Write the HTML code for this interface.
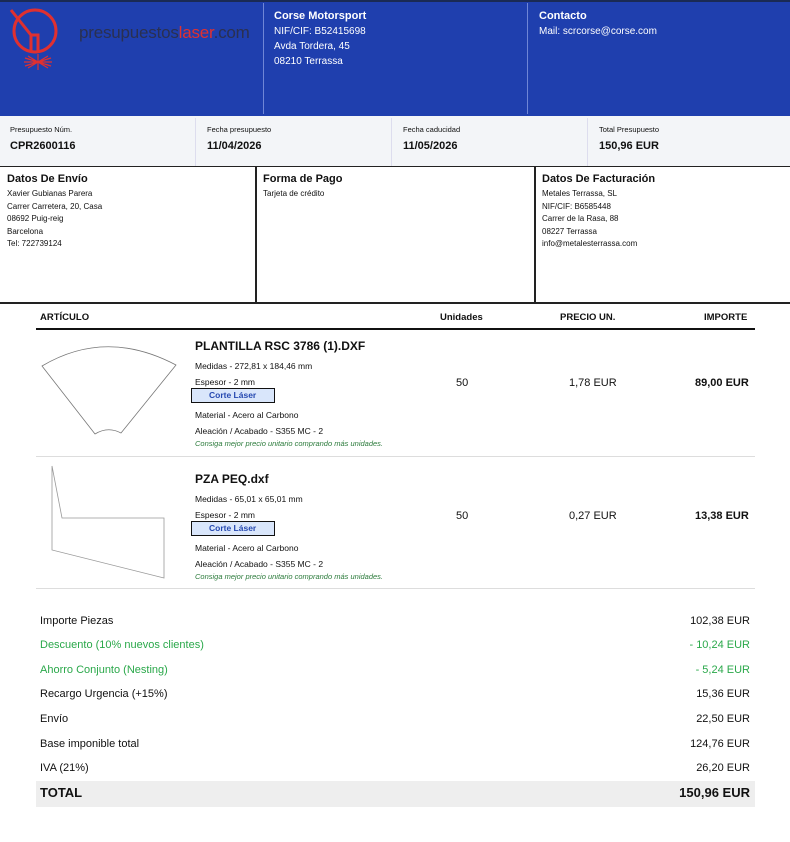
<!DOCTYPE html><html><head><meta charset="utf-8"><style>
*{margin:0;padding:0;box-sizing:border-box}
body{width:790px;height:842px;background:#fff;font-family:"Liberation Sans",sans-serif;color:#111;position:relative;overflow:hidden}
.a{position:absolute}
.hdr{left:0;top:0;width:790px;height:116px;background:#1f3fae;border-top:2px solid #1a2a55}
.w{color:#fff}
.bx{font-size:8px;line-height:12.6px}
.row{position:absolute;left:40px;width:710px;font-size:11px}
.row span{position:absolute;right:0}
</style></head><body>
<div class="a hdr"></div>
<svg class="a" style="left:0;top:0" width="80" height="75" viewBox="0 0 80 75">
<circle cx="35" cy="31" r="21" fill="none" stroke="#e03030" stroke-width="3"/>
<path d="M11 10 L31 35 L38 35 L38 52 M31 35 L31 52" fill="none" stroke="#e03030" stroke-width="3"/>
<g stroke="#e03030" stroke-width="1.2"><path d="M24 62 L52 62 M38 54 L38 70 M28 56 L48 68 M48 56 L28 68 M25 58 L51 66 M51 58 L25 66"/></g>
</svg>
<div class="a" style="left:79px;top:23px;font-size:17px;color:#2a3050;letter-spacing:-0.2px">presupuestos<span style="color:#e03030">laser</span>.com</div>
<div class="a" style="left:263px;top:3px;width:1px;height:111px;background:#6f86d6"></div>
<div class="a" style="left:527px;top:3px;width:1px;height:111px;background:#6f86d6"></div>
<div class="a w" style="left:274px;top:9px;font-size:11px;line-height:15px"><b>Corse Motorsport</b><br><span style="font-size:10px">NIF/CIF: B52415698<br>Avda Tordera, 45<br>08210 Terrassa</span></div>
<div class="a w" style="left:539px;top:9px;font-size:11px;line-height:15px"><b>Contacto</b><br><span style="font-size:10px">Mail: scrcorse@corse.com</span></div>
<div class="a" style="left:0;top:116px;width:790px;height:51px;background:#f3f5f8;border-bottom:1px solid #222"></div>
<div class="a" style="left:195px;top:118px;width:1px;height:48px;background:#dde"></div>
<div class="a" style="left:391px;top:118px;width:1px;height:48px;background:#dde"></div>
<div class="a" style="left:587px;top:118px;width:1px;height:48px;background:#dde"></div>
<div class="a" style="left:10px;top:125px;font-size:7.5px">Presupuesto Núm.</div><div class="a" style="left:10px;top:140px;font-size:11px;font-weight:bold">CPR2600116</div>
<div class="a" style="left:207px;top:125px;font-size:7.5px">Fecha presupuesto</div><div class="a" style="left:207px;top:140px;font-size:11px;font-weight:bold">11/04/2026</div>
<div class="a" style="left:403px;top:125px;font-size:7.5px">Fecha caducidad</div><div class="a" style="left:403px;top:140px;font-size:11px;font-weight:bold">11/05/2026</div>
<div class="a" style="left:599px;top:125px;font-size:7.5px">Total Presupuesto</div><div class="a" style="left:599px;top:140px;font-size:11px;font-weight:bold">150,96 EUR</div>
<div class="a" style="left:0;top:302px;width:790px;height:2px;background:#222"></div>
<div class="a" style="left:255px;top:167px;width:2px;height:136px;background:#222"></div>
<div class="a" style="left:534px;top:167px;width:2px;height:136px;background:#222"></div>
<div class="a" style="left:7px;top:173px;font-size:11px;font-weight:bold">Datos De Envío</div>
<div class="a bx" style="left:7px;top:188px">Xavier Gubianas Parera<br>Carrer Carretera, 20, Casa<br>08692 Puig-reig<br>Barcelona<br>Tel: 722739124</div>
<div class="a" style="left:263px;top:173px;font-size:11px;font-weight:bold">Forma de Pago</div>
<div class="a bx" style="left:263px;top:188px">Tarjeta de crédito</div>
<div class="a" style="left:542px;top:173px;font-size:11px;font-weight:bold">Datos De Facturación</div>
<div class="a bx" style="left:542px;top:188px">Metales Terrassa, SL<br>NIF/CIF: B6585448<br>Carrer de la Rasa, 88<br>08227 Terrassa<br>info@metalesterrassa.com</div>
<div class="a" style="left:40px;top:312px;font-size:9.5px;font-weight:bold">ARTÍCULO</div>
<div class="a" style="left:440px;top:312px;font-size:9.5px;font-weight:bold">Unidades</div>
<div class="a" style="left:560px;top:312px;font-size:9.5px;font-weight:bold">PRECIO UN.</div>
<div class="a" style="left:704px;top:312px;font-size:9.5px;font-weight:bold">IMPORTE</div>
<div class="a" style="left:36px;top:328px;width:719px;height:2px;background:#111"></div>
<div class="a" style="left:36px;top:456px;width:719px;height:1px;background:#ddd"></div>
<div class="a" style="left:36px;top:588px;width:719px;height:1px;background:#ddd"></div>
<svg class="a" style="left:36px;top:340px" width="150" height="250" viewBox="0 0 150 250">
<path d="M6 26 Q70 -12 140 25 L85 93 Q72 86 59 94 Z" fill="#fff" stroke="#777" stroke-width="0.8" stroke-linejoin="round"/>
<path d="M16 126 L26 178 L128 178 L128 238 L16 210 Z" fill="none" stroke="#999" stroke-width="0.8"/>
</svg>
<div class="a" style="left:195px;top:339px;font-size:12px;font-weight:bold">PLANTILLA RSC 3786 (1).DXF</div>
<div class="a" style="left:195px;top:472px;font-size:12px;font-weight:bold">PZA PEQ.dxf</div>
<div class="a" style="left:195px;top:359px;font-size:8.5px;line-height:15.5px">Medidas - 272,81 x 184,46 mm<br>Espesor - 2 mm</div>
<div class="a" style="left:195px;top:492px;font-size:8.5px;line-height:15.5px">Medidas - 65,01 x 65,01 mm<br>Espesor - 2 mm</div>
<div class="a" style="left:191px;top:388px;width:84px;height:15px;background:#d9e6fb;border:1px solid #111;font-size:8.5px;font-weight:bold;color:#2548b0;padding-left:17px;line-height:13px">Corte Láser</div>
<div class="a" style="left:191px;top:521px;width:84px;height:15px;background:#d9e6fb;border:1px solid #111;font-size:8.5px;font-weight:bold;color:#2548b0;padding-left:17px;line-height:13px">Corte Láser</div>
<div class="a" style="left:195px;top:407px;font-size:8.5px;line-height:16px">Material - Acero al Carbono<br>Aleación / Acabado - S355 MC - 2</div>
<div class="a" style="left:195px;top:540px;font-size:8.5px;line-height:16px">Material - Acero al Carbono<br>Aleación / Acabado - S355 MC - 2</div>
<div class="a" style="left:195px;top:439px;font-size:7.5px;font-style:italic;color:#2a7a3a">Consiga mejor precio unitario comprando más unidades.</div>
<div class="a" style="left:195px;top:572px;font-size:7.5px;font-style:italic;color:#2a7a3a">Consiga mejor precio unitario comprando más unidades.</div>
<div class="a" style="left:456px;top:377px;font-size:11px">50</div>
<div class="a" style="left:569px;top:377px;font-size:11px">1,78 EUR</div>
<div class="a" style="left:695px;top:377px;font-size:11px;font-weight:bold">89,00 EUR</div>
<div class="a" style="left:456px;top:510px;font-size:11px">50</div>
<div class="a" style="left:569px;top:510px;font-size:11px">0,27 EUR</div>
<div class="a" style="left:695px;top:510px;font-size:11px;font-weight:bold">13,38 EUR</div>
<div class="row" style="top:615px">Importe Piezas<span>102,38 EUR</span></div>
<div class="row" style="top:639px;color:#2aa84a">Descuento (10% nuevos clientes)<span>- 10,24 EUR</span></div>
<div class="row" style="top:664px;color:#2aa84a">Ahorro Conjunto (Nesting)<span>- 5,24 EUR</span></div>
<div class="row" style="top:688px">Recargo Urgencia (+15%)<span>15,36 EUR</span></div>
<div class="row" style="top:713px">Envío<span>22,50 EUR</span></div>
<div class="row" style="top:738px">Base imponible total<span>124,76 EUR</span></div>
<div class="row" style="top:762px">IVA (21%)<span>26,20 EUR</span></div>
<div class="a" style="left:36px;top:781px;width:719px;height:26px;background:#eee"></div>
<div class="row" style="top:785px;font-size:13px;font-weight:bold">TOTAL<span>150,96 EUR</span></div>
</body></html>
